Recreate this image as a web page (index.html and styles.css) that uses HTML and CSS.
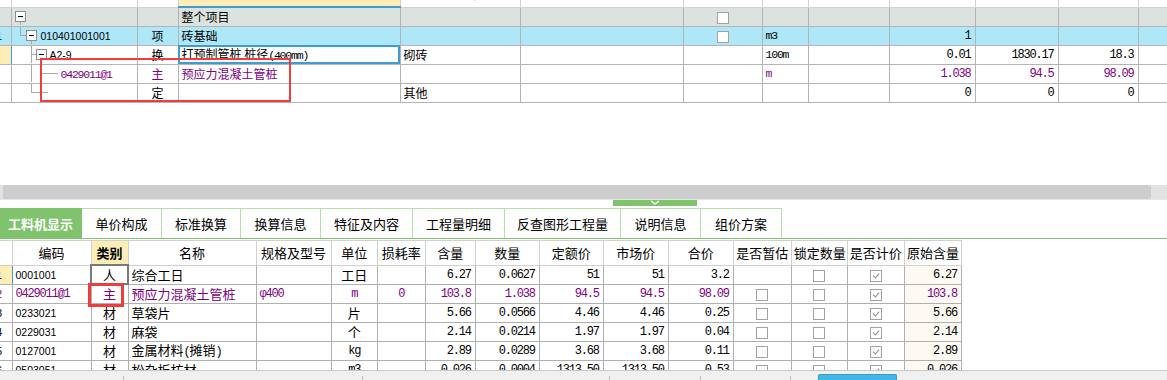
FILE: index.html
```html
<!DOCTYPE html>
<html>
<head>
  <meta charset="UTF-8">
  <title>工料机显示</title>
  <link rel="stylesheet" href="styles.css">
</head>
<body>
  <!-- 上半部分：清单/定额树 -->
  <div class="top-pane">
    <table class="grid top-grid">
      <colgroup>
        <col><col><col><col><col><col><col><col><col><col><col><col><col>
      </colgroup>
      <thead>
        <tr>
          <th></th><th>编码</th><th>类别</th><th class="cur-col">名称</th><th>项目特征</th><th>规格型号</th>
          <th>锁定综合价</th><th>单位</th><th>含量表达式</th><th>工程量</th><th>单价</th><th>合价</th><th></th>
        </tr>
      </thead>
      <tbody>
        <tr class="row-root">
          <td class="rn"></td>
          <td class="tree">
            <svg class="tw" width="16" height="18">
              <rect x="3.5" y="3.5" width="10" height="10" class="box"/>
              <line x1="6" y1="8.5" x2="11" y2="8.5" class="minus"/>
              <line x1="8.5" y1="14" x2="8.5" y2="18" class="ln"/>
            </svg>
          </td>
          <td></td>
          <td class="bold">整个项目</td>
          <td></td><td></td>
          <td class="c"><span class="cb"></span></td>
          <td></td><td></td><td></td><td></td><td></td><td></td>
        </tr>
        <tr class="row-item">
          <td class="rn"><span>1</span></td>
          <td class="tree">
            <svg class="tw" width="26" height="18">
              <line x1="8.5" y1="0" x2="8.5" y2="8.5" class="ln"/>
              <line x1="8.5" y1="8.5" x2="14" y2="8.5" class="ln"/>
              <rect x="14.5" y="3.5" width="10" height="10" class="box"/>
              <line x1="17" y1="8.5" x2="22" y2="8.5" class="minus"/>
              <line x1="19.5" y1="14" x2="19.5" y2="18" class="ln"/>
            </svg><span class="code">010401001001</span>
          </td>
          <td class="c">项</td>
          <td>砖基础</td>
          <td></td><td></td>
          <td class="c"><span class="cb"></span></td>
          <td class="mono">m3</td>
          <td></td>
          <td class="num">1</td>
          <td></td><td></td><td></td>
        </tr>
        <tr>
          <td class="rn rn-cur"></td>
          <td class="tree">
            <svg class="tw" width="35" height="18">
              <line x1="19.5" y1="0" x2="19.5" y2="18" class="ln"/>
              <line x1="19.5" y1="8.5" x2="24" y2="8.5" class="ln"/>
              <rect x="24.5" y="3.5" width="10" height="10" class="box"/>
              <line x1="27" y1="8.5" x2="32" y2="8.5" class="minus"/>
              <line x1="29.5" y1="14" x2="29.5" y2="18" class="ln"/>
            </svg><span class="code">A2-9</span>
          </td>
          <td class="c">换</td>
          <td class="sel">打预制管桩 桩径<span class="mono">(400mm)</span></td>
          <td>砌砖</td>
          <td></td><td></td>
          <td class="mono">100m</td>
          <td></td>
          <td class="num">0.01</td>
          <td class="num">1830.17</td>
          <td class="num">18.3</td>
          <td></td>
        </tr>
        <tr class="row-main">
          <td class="rn"></td>
          <td class="tree">
            <svg class="tw" width="46" height="18">
              <line x1="19.5" y1="0" x2="19.5" y2="18" class="ln"/>
              <line x1="29.5" y1="0" x2="29.5" y2="8.5" class="ln"/>
              <line x1="29.5" y1="8.5" x2="46" y2="8.5" class="ln"/>
            </svg><span class="mono">0429011@1</span>
          </td>
          <td class="c">主</td>
          <td>预应力混凝土管桩</td>
          <td></td><td></td><td></td>
          <td class="mono">m</td>
          <td></td>
          <td class="num">1.038</td>
          <td class="num">94.5</td>
          <td class="num">98.09</td>
          <td></td>
        </tr>
        <tr>
          <td class="rn"></td>
          <td class="tree">
            <svg class="tw" width="37" height="18">
              <line x1="19.5" y1="0" x2="19.5" y2="8.5" class="ln"/>
              <line x1="19.5" y1="8.5" x2="36" y2="8.5" class="ln"/>
            </svg>
          </td>
          <td class="c">定</td>
          <td></td>
          <td>其他</td>
          <td></td><td></td><td></td><td></td>
          <td class="num">0</td>
          <td class="num">0</td>
          <td class="num">0</td>
          <td></td>
        </tr>
      </tbody>
    </table>
    <div class="mark mark-top"></div>
  </div>

  <div class="hscroll"><div class="thumb"></div></div>

  <div class="splitter">
    <div class="grip">
      <svg width="12" height="6"><polyline points="2,1 6,4 10,1" class="chev"/></svg>
    </div>
  </div>

  <!-- 页签 -->
  <div class="tabs">
    <div class="tab active t1">工料机显示</div>
    <div class="tab t2">单价构成</div>
    <div class="tab t3">标准换算</div>
    <div class="tab t4">换算信息</div>
    <div class="tab t5">特征及内容</div>
    <div class="tab t6">工程量明细</div>
    <div class="tab t7">反查图形工程量</div>
    <div class="tab t8">说明信息</div>
    <div class="tab t9">组价方案</div>
  </div>

  <!-- 下半部分：工料机 -->
  <div class="bottom-pane">
    <table class="grid sub-grid">
      <colgroup>
        <col><col><col><col><col><col><col><col><col><col><col><col><col><col><col><col>
      </colgroup>
      <thead>
        <tr>
          <th></th><th>编码</th><th class="cur-col">类别</th><th>名称</th><th>规格及型号</th><th>单位</th>
          <th>损耗率</th><th>含量</th><th>数量</th><th>定额价</th><th>市场价</th><th>合价</th>
          <th>是否暂估</th><th>锁定数量</th><th>是否计价</th><th>原始含量</th>
        </tr>
      </thead>
      <tbody>
        <tr>
          <td class="rn rn-cur"><span>1</span></td>
          <td class="code">0001001</td>
          <td class="c cell-cur">人</td>
          <td>综合工日</td>
          <td></td>
          <td class="c">工日</td>
          <td></td>
          <td class="num">6.27</td>
          <td class="num">0.0627</td>
          <td class="num">51</td>
          <td class="num">51</td>
          <td class="num">3.2</td>
          <td></td>
          <td class="c"><span class="cb"></span></td>
          <td class="c"><span class="cb on"></span></td>
          <td class="num orig">6.27</td>
        </tr>
        <tr class="row-main">
          <td class="rn"><span>2</span></td>
          <td class="mono">0429011@1</td>
          <td class="c">主</td>
          <td>预应力混凝土管桩</td>
          <td class="mono">φ400</td>
          <td class="c mono">m</td>
          <td class="c mono">0</td>
          <td class="num">103.8</td>
          <td class="num">1.038</td>
          <td class="num">94.5</td>
          <td class="num">94.5</td>
          <td class="num">98.09</td>
          <td class="c"><span class="cb"></span></td>
          <td class="c"><span class="cb"></span></td>
          <td class="c"><span class="cb on"></span></td>
          <td class="num orig">103.8</td>
        </tr>
        <tr>
          <td class="rn"><span>3</span></td>
          <td class="code">0233021</td>
          <td class="c">材</td>
          <td>草袋片</td>
          <td></td>
          <td class="c">片</td>
          <td></td>
          <td class="num">5.66</td>
          <td class="num">0.0566</td>
          <td class="num">4.46</td>
          <td class="num">4.46</td>
          <td class="num">0.25</td>
          <td class="c"><span class="cb"></span></td>
          <td class="c"><span class="cb"></span></td>
          <td class="c"><span class="cb on"></span></td>
          <td class="num orig">5.66</td>
        </tr>
        <tr>
          <td class="rn"><span>4</span></td>
          <td class="code">0229031</td>
          <td class="c">材</td>
          <td>麻袋</td>
          <td></td>
          <td class="c">个</td>
          <td></td>
          <td class="num">2.14</td>
          <td class="num">0.0214</td>
          <td class="num">1.97</td>
          <td class="num">1.97</td>
          <td class="num">0.04</td>
          <td class="c"><span class="cb"></span></td>
          <td class="c"><span class="cb"></span></td>
          <td class="c"><span class="cb on"></span></td>
          <td class="num orig">2.14</td>
        </tr>
        <tr>
          <td class="rn"><span>5</span></td>
          <td class="code">0127001</td>
          <td class="c">材</td>
          <td>金属材料<span class="mono">(</span>摊销<span class="mono">)</span></td>
          <td></td>
          <td class="c mono">kg</td>
          <td></td>
          <td class="num">2.89</td>
          <td class="num">0.0289</td>
          <td class="num">3.68</td>
          <td class="num">3.68</td>
          <td class="num">0.11</td>
          <td class="c"><span class="cb"></span></td>
          <td class="c"><span class="cb"></span></td>
          <td class="c"><span class="cb on"></span></td>
          <td class="num orig">2.89</td>
        </tr>
        <tr>
          <td class="rn"><span>6</span></td>
          <td class="code">0503051</td>
          <td class="c">材</td>
          <td>松杂板枋材</td>
          <td></td>
          <td class="c mono">m3</td>
          <td></td>
          <td class="num">0.026</td>
          <td class="num">0.0004</td>
          <td class="num">1313.50</td>
          <td class="num">1313.50</td>
          <td class="num">0.53</td>
          <td class="c"><span class="cb"></span></td>
          <td class="c"><span class="cb"></span></td>
          <td class="c"><span class="cb on"></span></td>
          <td class="num orig">0.026</td>
        </tr>
      </tbody>
    </table>
    <div class="mark mark-sub"></div>
  </div>

  <div class="statusbar">
    <div class="seg s1"></div>
    <div class="seg s2"></div>
    <div class="seg s3"></div>
    <div class="seg s4"></div>
    <div class="seg s5"></div>
    <div class="seg s6"></div>
    <div class="blue-btn"></div>
  </div>
</body>
</html>
```
FILE: styles.css
```css
body {
  margin: 0;
  width: 1167px;
  height: 380px;
  overflow: hidden;
  background: #fff;
  color: #000;
  font-family: "Noto Sans CJK SC", sans-serif;
  font-size: 12px;
}

/* ---------- 通用表格 ---------- */
.grid {
  border-collapse: collapse;
  table-layout: fixed;
}
.grid th, .grid td {
  padding: 0 3px;
  white-space: nowrap;
  overflow: hidden;
  text-align: left;
  font-weight: normal;
}
.grid tbody tr { height: 19px; }
.grid th:first-child, .grid td:first-child { border-left-style: hidden; }
.c { text-align: center !important; }
.num {
  text-align: right !important;
  font-family: "Liberation Mono", monospace;
  font-size: 12px;
  letter-spacing: -1.2px;
  padding-right: 4px !important;
}
.mono {
  font-family: "Liberation Mono", monospace;
  font-size: 12px;
  letter-spacing: -1.2px;
}
.code {
  font-family: "Liberation Sans", sans-serif;
  font-size: 10.5px;
}
.bold { font-weight: bold; }
.row-main td { color: #800080; }

.rn { padding: 0 !important; }
.rn span { display: inline-block; margin-left: -4px; font-family: "Liberation Sans", sans-serif; font-size: 11px; }
.rn-cur { background: #fdeeb8; border-right: 1px solid #3c9dd6 !important; }
.cur-col { background: #fdeeb8; border-bottom: 2px solid #3c9dd6 !important; }

.cb {
  display: inline-block;
  width: 10px;
  height: 10px;
  border: 1px solid #a2a2a2;
  background: #fff;
  vertical-align: -2px;
  position: relative;
}
.cb.on::after {
  content: "";
  position: absolute;
  left: 3px;
  top: 1px;
  width: 3px;
  height: 5px;
  border: solid #8a8a8a;
  border-width: 0 1px 1px 0;
  transform: rotate(40deg);
}

/* ---------- 上半部分 ---------- */
.top-pane {
  position: relative;
  height: 185px;
  overflow: hidden;
}
.top-grid {
  width: 1178px;
  margin-top: -20px;
}
.top-grid col:nth-child(1) { width: 11px; }
.top-grid col:nth-child(2) { width: 126px; }
.top-grid col:nth-child(3) { width: 41px; }
.top-grid col:nth-child(4) { width: 222px; }
.top-grid col:nth-child(5) { width: 120px; }
.top-grid col:nth-child(6) { width: 163px; }
.top-grid col:nth-child(7) { width: 79px; }
.top-grid col:nth-child(8) { width: 46px; }
.top-grid col:nth-child(9) { width: 81px; }
.top-grid col:nth-child(10) { width: 86px; }
.top-grid col:nth-child(11) { width: 83px; }
.top-grid col:nth-child(12) { width: 80px; }
.top-grid col:nth-child(13) { width: 40px; }
.top-grid th {
  height: 25px;
  border: 1px solid #d2d2d2;
  text-align: center;
  font-size: 12px;
}
.top-grid td {
  height: 17px;
  line-height: 16px;
  border: 1px solid #b4b4b4;
}
.top-grid .mono { font-size: 11.5px; }
.row-root td { background: #dce3de; }
.row-item td { background: #aee7f8; }
.tree { padding-left: 0 !important; }
.tw { display: inline-block; vertical-align: top; margin-right: 3px; height: 17px; }
.tw .ln { stroke: #a9a9a9; stroke-width: 1; shape-rendering: crispEdges; }
.tw .box { fill: #fff; stroke: #8e8e8e; stroke-width: 1; shape-rendering: crispEdges; }
.tw .minus { stroke: #000; stroke-width: 1; shape-rendering: crispEdges; }
.sel { outline: 2px solid #3c9dd6; outline-offset: -2px; }

.mark {
  position: absolute;
  box-sizing: border-box;
  border: 2px solid #ef3d3d;
}
.mark-top { left: 40px; top: 58px; width: 251px; height: 44px; }

/* ---------- 滚动条 / 分隔条 ---------- */
.hscroll {
  height: 14px;
  background: #e2e2e2;
  padding-left: 3px;
  padding-right: 16px;
}
.thumb {
  height: 14px;
  background: #cdcdcd;
  border-radius: 0 2px 2px 0;
}
.splitter {
  height: 8px;
  border-top: 1px solid #e6e6e6;
  display: flex;
  padding-left: 613px;
}
.grip {
  width: 84px;
  height: 6px;
  background: #7fc46d;
  display: flex;
  justify-content: center;
}
.chev { fill: none; stroke: #fff; stroke-width: 1.2; }

/* ---------- 页签 ---------- */
.tabs {
  display: flex;
  height: 30px;
  border-bottom: 1px solid #7fc46d;
  margin-bottom: 1px;
}
.tab {
  box-sizing: border-box;
  height: 30px;
  line-height: 29px;
  text-align: center;
  font-size: 13px;
  border-top: 1px solid #b5e2a4;
  border-right: 1px solid #b5e2a4;
}
.tab.active {
  background: #7fc46d;
  border-color: #7fc46d;
  color: #fff;
  font-weight: bold;
}
.t1 { width: 82px; }
.t2 { width: 80px; }
.t3 { width: 79px; }
.t4 { width: 80px; }
.t5 { width: 92px; }
.t6 { width: 92px; }
.t7 { width: 116px; }
.t8 { width: 80px; }
.t9 { width: 81px; }

/* ---------- 下半部分 ---------- */
.bottom-pane {
  position: relative;
  height: 130px;
  overflow: hidden;
}
.sub-grid { width: 962px; font-size: 13px; }
.sub-grid col:nth-child(1) { width: 12px; }
.sub-grid col:nth-child(2) { width: 79px; }
.sub-grid col:nth-child(3) { width: 37px; }
.sub-grid col:nth-child(4) { width: 128px; }
.sub-grid col:nth-child(5) { width: 75px; }
.sub-grid col:nth-child(6) { width: 46px; }
.sub-grid col:nth-child(7) { width: 48px; }
.sub-grid col:nth-child(8) { width: 50px; }
.sub-grid col:nth-child(9) { width: 64px; }
.sub-grid col:nth-child(10) { width: 64px; }
.sub-grid col:nth-child(11) { width: 65px; }
.sub-grid col:nth-child(12) { width: 65px; }
.sub-grid col:nth-child(13) { width: 58px; }
.sub-grid col:nth-child(14) { width: 56px; }
.sub-grid col:nth-child(15) { width: 57px; }
.sub-grid col:nth-child(16) { width: 57px; }
.sub-grid th {
  height: 23px;
  border: 1px solid #d0d0d0;
  text-align: center;
  font-size: 13px;
  padding: 0 2px;
}
.sub-grid th.cur-col { font-weight: bold; }
.sub-grid td {
  height: 17px;
  line-height: 16px;
  border: 1px solid #b0b0b0;
}
.sub-grid .code { font-size: 10.5px; }
.orig { background: #fdfaf4; }
.cell-cur { outline: 2px solid #7a7a7a; outline-offset: -1px; }
.mark-sub { left: 88px; top: 43px; width: 36px; height: 24px; border-width: 3px; }

/* ---------- 状态栏 ---------- */
.statusbar {
  height: 9px;
  border-top: 1px solid #c9c9c9;
  background: #f0f0f0;
  display: flex;
}
.seg { margin-top: 5px; height: 4px; border-right: 1px solid #bdbdbd; }
.s1 { width: 123px; }
.s2 { width: 238px; }
.s3 { width: 246px; }
.s4 { width: 90px; }
.s5 { width: 89px; }
.s6 { width: 27px; border-right: none; }
.blue-btn {
  margin-top: 3px;
  width: 79px;
  height: 6px;
  background: #45b5e2;
  border: 1px solid #2f9fd0;
  border-bottom: none;
  border-radius: 2px 2px 0 0;
  box-sizing: border-box;
}
```
